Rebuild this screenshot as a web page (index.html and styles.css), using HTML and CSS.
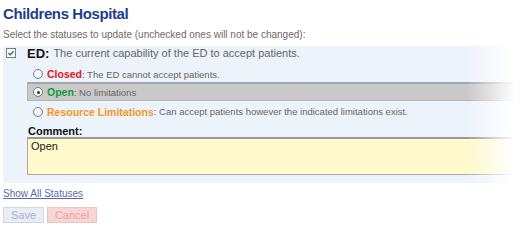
FILE: index.html
```html
<!DOCTYPE html>
<html lang="en">
<head>
    <meta charset="UTF-8">
    <meta name="viewport" content="width=device-width, initial-scale=1.0">
    <title>Childrens Hospital</title>
    <link rel="stylesheet" href="styles.css">
</head>
<body>
<div class="page">
    <h1>Childrens Hospital</h1>
    <p class="intro">Select the statuses to update (unchecked ones will not be changed):</p>

    <!-- ED status group -->
    <div class="panel">
        <div class="status-head">
            <span class="check">
                <svg width="10" height="10" viewBox="0 0 10 10">
                    <rect x="0.5" y="0.5" width="9" height="9" fill="#fff" stroke="#6e7f90"/>
                    <path d="M2.4 5 L4.2 6.8 L7.6 3" fill="none" stroke="#2a9a2a" stroke-width="1.5"/>
                </svg>
            </span>
            <b class="status-name">ED:</b>
            <span class="status-desc">The current capability of the ED to accept patients.</span>
        </div>

        <div class="options">
            <label class="option">
                <span class="radio"></span>
                <b class="closed">Closed</b>: The ED cannot accept patients.
            </label>
            <label class="option selected">
                <span class="radio on"></span>
                <b class="open">Open</b>: No limitations
            </label>
            <label class="option">
                <span class="radio"></span>
                <b class="limited">Resource Limitations</b>: Can accept patients however the indicated limitations exist.
            </label>

            <div class="comment-label">Comment:</div>
            <div class="comment">Open</div>
        </div>
    </div>

    <a class="show-all" href="#">Show All Statuses</a>

    <div class="buttons">
        <button class="btn btn-save">Save</button>
        <button class="btn btn-cancel">Cancel</button>
    </div>

    <!-- right edge fades out -->
    <div class="fade"></div>
</div>
</body>
</html>
```

FILE: styles.css
```css
body {
    margin: 0;
    font-family: "Liberation Sans", Arial, sans-serif;
    background: #fff;
    color: #555;
}
.page {
    position: relative;
    padding: 4px 0 0 3px;
    height: 223px;
    overflow: hidden;
}
h1 {
    margin: 0;
    font-size: 15px;
    letter-spacing: -0.4px;
    line-height: 20px;
    color: #1d3c8f;
}
.intro {
    margin: 4px 0 0;
    font-size: 10px;
    line-height: 14px;
    color: #6b6b6b;
}
.panel {
    margin-top: 4px;
    margin-right: 6px;
    background: #edf3fb;
    padding: 0 0 8px 3px;
}
.status-head {
    display: flex;
    align-items: center;
    height: 14px;
}
.check {
    display: flex;
    width: 10px;
    height: 10px;
}
.status-name {
    margin-left: 11px;
    font-size: 13px;
    color: #111;
}
.status-desc {
    margin-left: 4px;
    font-size: 11px;
    color: #666;
}
.options {
    margin: 6px 0 0 21px;
}
.option {
    display: flex;
    align-items: center;
    height: 16px;
    padding-left: 6px;
    font-size: 9.5px;
    color: #666;
    white-space: nowrap;
}
.option b {
    font-size: 10.5px;
}
.option.selected {
    height: 16px;
    background: #c9c9c9;
    border: 1px solid #b4b4b4;
    border-top: 2px solid #a6a6a6;
    padding-left: 5px;
}
.option.selected + .option {
    height: 21px;
}
.radio {
    width: 8px;
    height: 8px;
    margin-right: 4px;
    border: 1px solid #6a7d92;
    border-radius: 50%;
    background: radial-gradient(circle at 40% 35%, #fff 30%, #dde3ea 100%);
    position: relative;
}
.radio.on::after {
    content: "";
    position: absolute;
    left: 2.5px;
    top: 2.5px;
    width: 3px;
    height: 3px;
    border-radius: 50%;
    background: #333;
}
.closed {
    color: #e8141c;
}
.open {
    color: #15993c;
}
.limited {
    color: #f7941d;
}
.comment-label {
    margin: 3px 0 0 1px;
    font-size: 11px;
    line-height: 12px;
    font-weight: bold;
    color: #111;
}
.comment {
    height: 33px;
    padding: 1px 3px;
    font-size: 11px;
    line-height: 13px;
    color: #222;
    background: #fff9cc;
    border: 1px solid #aaa;
    border-top: 2px solid #999;
}
.show-all {
    display: inline-block;
    margin-top: 3px;
    font-size: 10px;
    line-height: 12px;
    color: #5a6aa8;
}
.buttons {
    display: flex;
    gap: 3px;
    margin-top: 6px;
}
.btn {
    height: 16px;
    padding: 0;
    font-family: "Liberation Sans", Arial, sans-serif;
    font-size: 11px;
    line-height: 14px;
    cursor: default;
}
.btn-save {
    width: 41px;
    background: #e9edf4;
    border: 1px solid #d2d8e2;
    color: #a9b3c8;
}
.btn-cancel {
    width: 50px;
    background: #f7d6d6;
    border: 1px solid #eec2c2;
    color: #eea0a6;
}
.fade {
    position: absolute;
    top: 0;
    right: 0;
    bottom: 0;
    width: 58px;
    background: linear-gradient(to right, rgba(255, 255, 255, 0) 0, #fff 48px);
    pointer-events: none;
}
```
